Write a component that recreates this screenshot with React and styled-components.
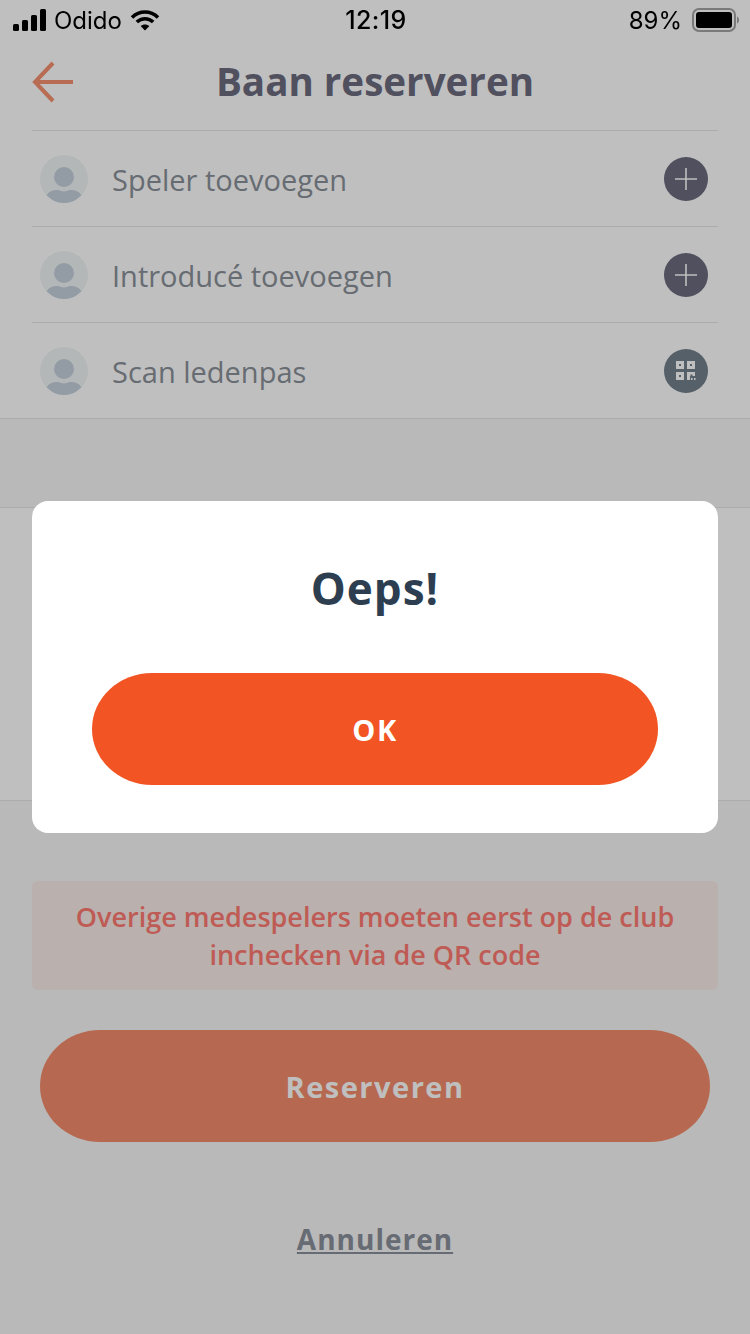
import React from "react";
import styled, { createGlobalStyle } from "styled-components";

const GlobalStyle = createGlobalStyle`
  html, body {
    margin: 0;
    padding: 0;
    background: #fff;
  }
  * {
    box-sizing: border-box;
  }
`;

const Page = styled.div`
  width: 750px;
  height: 1334px;
  overflow: hidden;
  background: #fff;
  font-family: "Open Sans", "Noto Sans", sans-serif;
`;

const Scrim = styled.div`
  position: fixed;
  left: 0;
  top: 0;
  width: 750px;
  height: 1334px;
  background: rgba(0, 0, 0, 0.25);
`;

const StatusBar = styled.div`
  position: relative;
  z-index: 2;
  height: 40px;
  padding: 0 11px 0 13px;
  display: grid;
  grid-template-columns: 1fr auto 1fr;
  align-items: center;
  color: #000;
  font-family: Inter, "Liberation Sans", sans-serif;
  font-size: 24px;
`;

const StatusLeft = styled.div`
  display: flex;
  align-items: center;
  gap: 8px;
`;

const StatusRight = styled.div`
  display: flex;
  align-items: center;
  justify-content: flex-end;
  gap: 10px;
`;

const Clock = styled.div`
  font-size: 25px;
  font-weight: 500;
  letter-spacing: 0.4px;
`;

const Header = styled.header`
  height: 91px;
  margin: 0 32px;
  display: flex;
  align-items: center;
  justify-content: center;
  position: relative;
  border-bottom: 1px solid #e6e6e6;
`;

const BackButton = styled.svg`
  position: absolute;
  left: 0;
  top: 21px;
`;

const Title = styled.h1`
  margin: 0 0 8px;
  font-size: 38.6px;
  line-height: 48px;
  font-weight: 700;
  color: #6b6b7f;
`;

const List = styled.div`
  border-bottom: 1px solid #e6e6e6;
`;

const Row = styled.div`
  height: ${(p) => (p.$last ? "95px" : "96px")};
  margin: 0 32px;
  padding: 0 10px 0 8px;
  display: flex;
  align-items: center;
  border-bottom: ${(p) => (p.$last ? "none" : "1px solid #e6e6e6")};
`;

const Avatar = styled.svg`
  flex: none;
  margin-right: 24px;
`;

const RowLabel = styled.span`
  flex: 1;
  margin-top: 2px;
  font-size: 29px;
  line-height: 40px;
  color: #8a9099;
`;

const RoundAction = styled.div`
  width: 44px;
  height: 44px;
  margin-top: 1px;
  border-radius: 50%;
  display: flex;
  align-items: center;
  justify-content: center;
  background: ${(p) => p.$bg};
`;

const Spacer = styled.div`
  height: 89px;
  background: #f7f7f7;
  border-bottom: 1px solid #e6e6e6;
`;

const Blank = styled.div`
  height: 293px;
  border-bottom: 1px solid #e6e6e6;
`;

const Footer = styled.div`
  height: 533px;
  padding: 80px 32px 0;
  background: #f7f7f7;
  display: flex;
  flex-direction: column;
  align-items: center;
`;

const Notice = styled.div`
  width: 100%;
  height: 109px;
  padding-top: 17px;
  border-radius: 6px;
  background: #f8ebe8;
  color: #ff7a72;
  font-size: 27px;
  line-height: 38px;
  font-weight: 600;
  text-align: center;
`;

const PillButton = styled.div`
  height: 112px;
  border-radius: 60px / 56px;
  display: flex;
  align-items: center;
  justify-content: center;
  font-size: 29px;
  font-weight: 700;
  letter-spacing: 1.5px;
  color: ${(p) => p.$color};
  background: ${(p) => p.$bg};
`;

const ReserveButton = styled(PillButton)`
  width: 670px;
  margin-top: 40px;
`;

const CancelLink = styled.a`
  margin-top: 77px;
  font-size: 28px;
  line-height: 40px;
  font-weight: 700;
  letter-spacing: 1px;
  color: #8a8f9b;
  text-decoration: underline;
`;

const Dialog = styled.div`
  position: fixed;
  z-index: 3;
  left: 32px;
  top: 501px;
  width: 686px;
  height: 332px;
  padding: 60px 60px 0;
  border-radius: 16px;
  background: #fff;
`;

const DialogTitle = styled.h2`
  margin: 0 0 58px;
  height: 54px;
  font-size: 44px;
  line-height: 54px;
  font-weight: 700;
  letter-spacing: 1px;
  text-align: center;
  color: #2c3e50;
`;

function SignalIcon() {
  return (
    <svg width="33" height="22" viewBox="0 0 33 22">
      <rect x="0" y="15" width="6" height="7" rx="1.5" fill="#000" />
      <rect x="9" y="11" width="6" height="11" rx="1.5" fill="#000" />
      <rect x="18" y="6" width="6" height="16" rx="1.5" fill="#000" />
      <rect x="27" y="0" width="6" height="22" rx="1.5" fill="#000" />
    </svg>
  );
}

function WifiIcon() {
  return (
    <svg width="30" height="22" viewBox="0 0 30 22" fill="none" stroke="#000" strokeWidth="3.6">
      <path d="M2 8.5C9.5 1.2 20.5 1.2 28 8.5" />
      <path d="M6.8 13C11.5 8.6 18.5 8.6 23.2 13" />
      <path d="M15 21.5L10.6 17C13 14.9 17 14.9 19.4 17Z" fill="#000" stroke="none" />
    </svg>
  );
}

function BatteryIcon() {
  return (
    <svg width="47" height="24" viewBox="0 0 47 24">
      <rect x="1" y="1" width="42" height="22" rx="6" fill="none" stroke="#7a7a7a" strokeWidth="2" />
      <rect x="4" y="4" width="36" height="16" rx="3" fill="#000" />
      <path d="M45 8.5C46.5 9 47 10.5 47 12S46.5 15 45 15.5Z" fill="#7a7a7a" />
    </svg>
  );
}

function PersonIcon() {
  return (
    <Avatar width="48" height="48" viewBox="0 0 48 48">
      <circle cx="24" cy="24" r="24" fill="#f0f5f6" />
      <circle cx="24" cy="22" r="10" fill="#c4cfdc" />
      <path d="M6.7 40C9 36 14 34.5 18 35C20.5 35.4 22 36.5 24 36.5C26 36.5 27.5 35.4 30 35C34 34.5 39 36 41.3 40C37 45 31 48 24 48C17 48 11 45 6.7 40Z" fill="#c4cfdc" />
    </Avatar>
  );
}

function PlusIcon() {
  return (
    <svg width="22" height="22" viewBox="0 0 22 22" stroke="#fff" strokeWidth="1.6">
      <path d="M11 0V22M0 11H22" />
    </svg>
  );
}

function QrIcon() {
  return (
    <svg width="20" height="20" viewBox="0 0 20 20" fill="#fff">
      <path fillRule="evenodd" d="M0 0H8V8H0ZM3 3V5H5V3Z" />
      <path fillRule="evenodd" d="M11 0H19V8H11ZM14 3V5H16V3Z" />
      <path fillRule="evenodd" d="M0 11H8V19H0ZM3 14V16H5V14Z" />
      <path d="M11 11H19V15H16.5V13.5H14.5V15H14V19H11Z" />
      <rect x="15" y="17" width="1.5" height="2" />
      <rect x="18" y="17" width="1.5" height="2" />
    </svg>
  );
}

const rows = [
  { label: "Speler toevoegen", bg: "#6b6b7f", icon: <PlusIcon /> },
  { label: "Introducé toevoegen", bg: "#6b6b7f", icon: <PlusIcon /> },
  { label: "Scan ledenpas", bg: "#72808c", icon: <QrIcon />, last: true },
];

export default function App() {
  return (
    <Page>
      <GlobalStyle />
      <StatusBar>
        <StatusLeft>
          <SignalIcon />
          <span>Odido</span>
          <WifiIcon />
        </StatusLeft>
        <Clock>12:19</Clock>
        <StatusRight>
          <span>89%</span>
          <BatteryIcon />
        </StatusRight>
      </StatusBar>

      <Header>
        <BackButton width="42" height="42" viewBox="0 0 42 42" fill="none" stroke="#f4916f" strokeWidth="4">
          <path d="M41 21H3M21 2L3 21L21 40" />
        </BackButton>
        <Title>Baan reserveren</Title>
      </Header>

      <List>
        {rows.map((row) => (
          <Row key={row.label} $last={row.last}>
            <PersonIcon />
            <RowLabel>{row.label}</RowLabel>
            <RoundAction $bg={row.bg}>{row.icon}</RoundAction>
          </Row>
        ))}
      </List>

      <Spacer />
      <Blank />

      <Footer>
        <Notice>
          Overige medespelers moeten eerst op de club
          <br />
          inchecken via de QR code
        </Notice>
        <ReserveButton $bg="#f38c6b" $color="#fff">Reserveren</ReserveButton>
        <CancelLink>Annuleren</CancelLink>
      </Footer>

      <Scrim />
      <Dialog>
        <DialogTitle>Oeps!</DialogTitle>
        <PillButton $bg="#f25424" $color="#fff">OK</PillButton>
      </Dialog>
    </Page>
  );
}
